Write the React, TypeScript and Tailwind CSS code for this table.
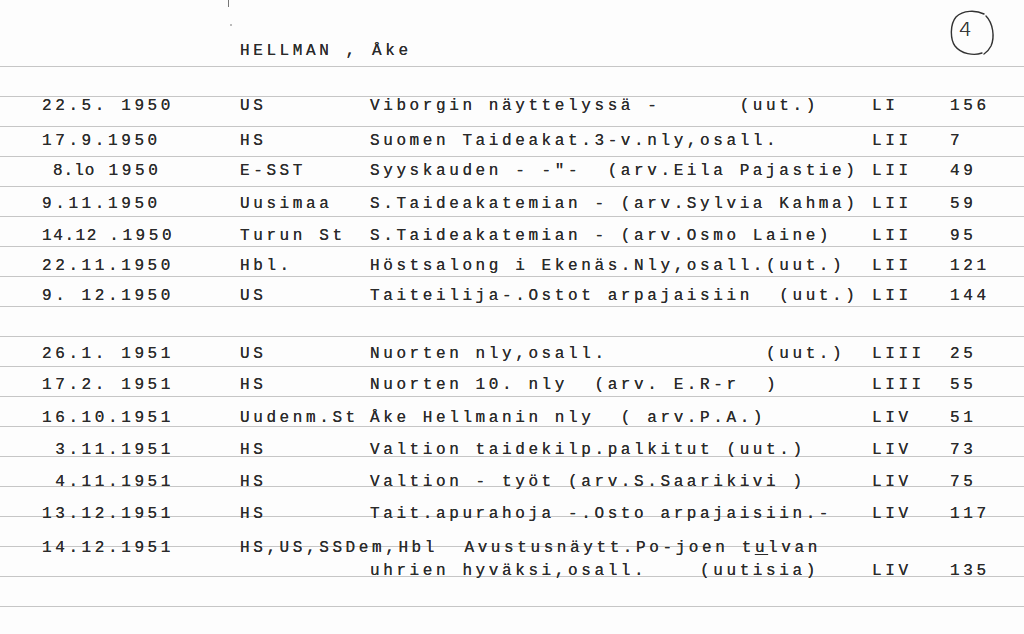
import type { ReactNode } from 'react';

type Entry = {
  date: ReactNode;
  src: string;
  desc: ReactNode;
  vol: string;
  page: string;
  pt: string;
  multi?: boolean;
};

const entries: (Entry | null)[] = [
  null,
  { date: '22.5. 1950', src: 'US', desc: 'Viborgin näyttelyssä -      (uut.)', vol: 'LI', page: '156', pt: 'pt-[2px]' },
  { date: '17.9.1950', src: 'HS', desc: 'Suomen Taideakat.3-v.nly,osall.', vol: 'LII', page: '7', pt: 'pt-[7px]' },
  {
    date: (
      <>
        <span className="pl-[11px] tracking-[1px]">8.lo</span> 1950
      </>
    ),
    src: 'E-SST',
    desc: 'Syyskauden - -"-  (arv.Eila Pajastie)',
    vol: 'LII',
    page: '49',
    pt: 'pt-[7px]'
  },
  { date: '9.11.1950', src: 'Uusimaa', desc: 'S.Taideakatemian - (arv.Sylvia Kahma)', vol: 'LII', page: '59', pt: 'pt-[10px]' },
  {
    date: (
      <>
        <span className="tracking-[1.6px]">14.12 </span>.1950
      </>
    ),
    src: 'Turun St',
    desc: 'S.Taideakatemian - (arv.Osmo Laine)',
    vol: 'LII',
    page: '95',
    pt: 'pt-[12px]'
  },
  { date: '22.11.1950', src: 'Hbl.', desc: 'Höstsalong i Ekenäs.Nly,osall.(uut.)', vol: 'LII', page: '121', pt: 'pt-[12px]' },
  { date: '9. 12.1950', src: 'US', desc: 'Taiteilija-.Ostot arpajaisiin  (uut.)', vol: 'LII', page: '144', pt: 'pt-[12px]' },
  null,
  { date: '26.1. 1951', src: 'US', desc: 'Nuorten nly,osall.            (uut.)', vol: 'LIII', page: '25', pt: 'pt-[10px]' },
  { date: '17.2. 1951', src: 'HS', desc: 'Nuorten 10. nly  (arv. E.R-r  )', vol: 'LIII', page: '55', pt: 'pt-[11px]' },
  { date: '16.10.1951', src: 'Uudenm.St', desc: 'Åke Hellmanin nly  ( arv.P.A.)', vol: 'LIV', page: '51', pt: 'pt-[14px]' },
  { date: ' 3.11.1951', src: 'HS', desc: 'Valtion taidekilp.palkitut (uut.)', vol: 'LIV', page: '73', pt: 'pt-[16px]' },
  { date: ' 4.11.1951', src: 'HS', desc: 'Valtion - työt (arv.S.Saarikivi )', vol: 'LIV', page: '75', pt: 'pt-[18px]' },
  { date: '13.12.1951', src: 'HS', desc: 'Tait.apurahoja -.Osto arpajaisiin.-', vol: 'LIV', page: '117', pt: 'pt-[20px]' },
  {
    date: '14.12.1951',
    src: 'HS,US,SSDem,Hbl',
    desc: (
      <>
        {'  Avustusnäytt.Po-joen t'}
        <span className="underline underline-offset-2">u</span>
        {'lvan'}
      </>
    ),
    vol: 'LIV',
    page: '135',
    pt: 'pt-[24px]',
    multi: true
  },
  null,
  null,
  null
];

function CardRow({ e }: { e: Entry | null }) {
  return (
    <div className={`h-[30px] border-t border-[#c6c6c6] grid grid-cols-[240px_130px_502px_78px_1fr] ${e ? e.pt : ''}`}>
      {e && (
        <>
          <div className="pl-[42px]">{e.date}</div>
          {e.multi ? (
            <div className="col-span-2">
              <div>
                {e.src}
                {e.desc}
              </div>
              <div className="mt-[9px] pl-[130px]">uhrien hyväksi,osall.    (uutisia)</div>
            </div>
          ) : (
            <>
              <div>{e.src}</div>
              <div>{e.desc}</div>
            </>
          )}
          <div className={e.multi ? 'pt-[23px]' : ''}>{e.vol}</div>
          <div className={e.multi ? 'pt-[23px]' : ''}>{e.page}</div>
        </>
      )}
    </div>
  );
}

export default function App() {
  return (
    <div className="w-[1024px] h-[634px] overflow-hidden bg-[#fdfdfd] text-[#2a2a2a] [text-shadow:0_0_0.4px_#444] font-['Liberation_Mono',monospace] text-[16px] leading-[14px] tracking-[3.6px] whitespace-pre">
      <header className="h-[66px] flex justify-between">
        <div>
          <div className="ml-[228px] w-px h-[7px] bg-[#777]" />
          <div className="ml-[230px] mt-[17px] w-[2px] h-[2px] bg-[#bbb]" />
          <div className="pl-[240px] pt-[18px]">HELLMAN , Åke</div>
        </div>
        <div className="relative mt-[10px] mr-[29px] w-[46px] h-[46px]">
          <svg className="absolute inset-0" width="46" height="46" viewBox="0 0 46 46" fill="none" stroke="#333" strokeWidth="1.4" strokeLinecap="round">
            <path d="M35 4 C27 0 14 0 7 7 C1 14 1 29 6 36 C12 44 25 46 33 43" />
            <path d="M37 6 C44 13 46 27 42 36 C40 40 38 42 35 44" />
          </svg>
          <span className="block pl-[10px] pt-[9px] tracking-normal font-['DejaVu_Sans',sans-serif] font-extralight text-[20px] leading-[20px] text-[#333]">
            4
          </span>
        </div>
      </header>
      {entries.map((e, i) => (
        <CardRow key={i} e={e} />
      ))}
    </div>
  );
}
